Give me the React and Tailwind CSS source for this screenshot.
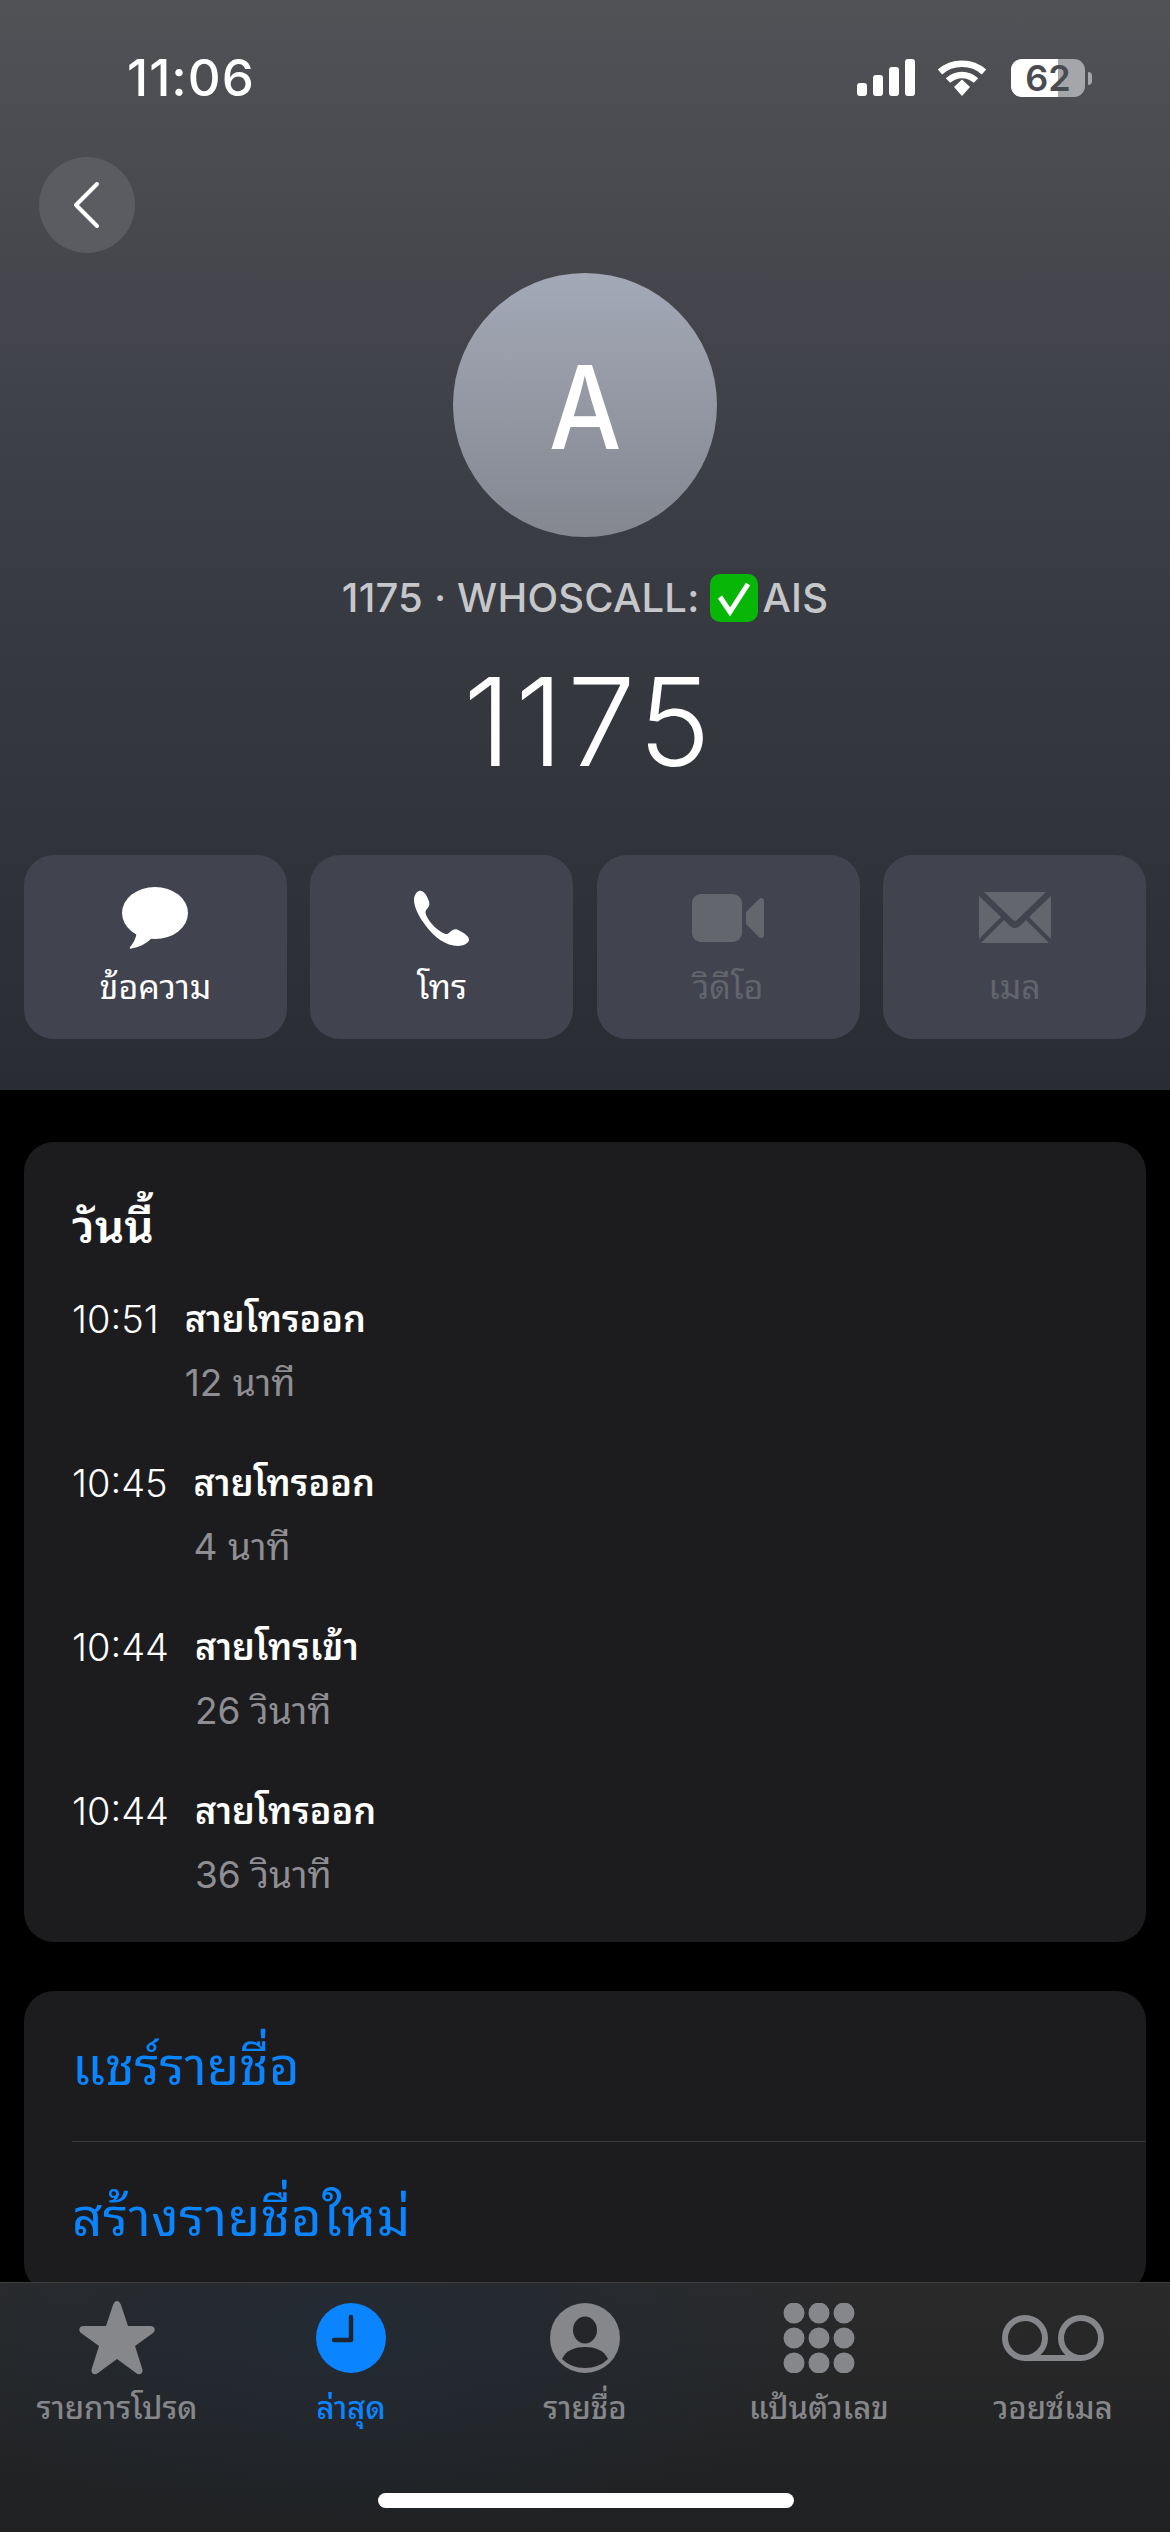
import React from 'react';

const actions = [
    { label: 'ข้อความ', icon: <MessageIcon />, dim: false },
    { label: 'โทร', icon: <PhoneIcon />, dim: false },
    { label: 'วิดีโอ', icon: <VideoIcon />, dim: true },
    { label: 'เมล', icon: <MailIcon />, dim: true },
];

const calls = [
    { time: '10:51', type: 'สายโทรออก', length: '12 นาที' },
    { time: '10:45', type: 'สายโทรออก', length: '4 นาที' },
    { time: '10:44', type: 'สายโทรเข้า', length: '26 วินาที' },
    { time: '10:44', type: 'สายโทรออก', length: '36 วินาที' },
];

const tabs = [
    { label: 'รายการโปรด', icon: <StarIcon /> },
    { label: 'ล่าสุด', icon: <ClockIcon />, active: true },
    { label: 'รายชื่อ', icon: <PersonIcon /> },
    { label: 'แป้นตัวเลข', icon: <KeypadIcon /> },
    { label: 'วอยซ์เมล', icon: <VoicemailIcon /> },
];

function MessageIcon() {
    return (
        <svg width="68" height="62" viewBox="0 0 68 62" fill="#fff">
            <ellipse cx="34" cy="26" rx="33" ry="26" />
            <path d="M16 42 C16 50 12 57 9 60 C8 62 10 62 12 61 C20 60 27 55 32 50 Z" />
        </svg>
    );
}

function PhoneIcon() {
    return (
        <svg width="56" height="56" viewBox="0 0 56 56" fill="#fff">
            <path d="M5 1 C9 0 12 4 14 9 C16 13 16 16 13 19 C11 21 11 23 13 27 C17 34 22 39 29 43 C32 45 34 44 36 42 C39 39 42 38 46 41 C51 44 55 46 55 50 C55 53 49 56 44 56 C32 56 20 47 12 36 C5 27 0 17 0 10 C0 6 2 2 5 1 Z" />
        </svg>
    );
}

function VideoIcon() {
    return (
        <svg width="72" height="48" viewBox="0 0 72 48" fill="#64666e">
            <rect x="0" y="0" width="50" height="48" rx="9" />
            <path d="M54 18 L67 5 C69 3 72 4 72 7 L72 41 C72 44 69 45 67 43 L54 30 Z" />
        </svg>
    );
}

function MailIcon() {
    return (
        <svg width="72" height="52" viewBox="0 0 72 52" fill="#64666e">
            <path d="M5 0 H67 L38 28 C36.500 29.500 35.500 29.500 34 28 Z" />
            <path d="M0 4 L22 25 L0 47 Z" />
            <path d="M72 4 L50 25 L72 47 Z" />
            <path d="M25 28 L31 34 C34 36.500 38 36.500 41 34 L47 28 L70 51 H2 Z" />
        </svg>
    );
}

function StarIcon() {
    return (
        <svg width="76" height="74" viewBox="0 0 76 74" fill="#85878a">
            <path d="M38 0 C40 0 41 2 42 4 L49 25 L71 25 C76 25 77 29 74 32 L56 45 L63 67 C65 72 61 75 57 72 L38 58 L19 72 C15 75 11 72 13 67 L20 45 L2 32 C-1 29 0 25 5 25 L27 25 L34 4 C35 2 36 0 38 0 Z" />
        </svg>
    );
}

function ClockIcon() {
    return (
        <svg width="70" height="70" viewBox="0 0 70 70">
            <circle cx="35" cy="35" r="35" fill="#0a84ff" />
            <path d="M35 14 V37 H18" fill="none" stroke="#1c2530" strokeWidth="4.500" strokeLinecap="round" strokeLinejoin="round" />
        </svg>
    );
}

function PersonIcon() {
    return (
        <svg width="70" height="70" viewBox="0 0 70 70">
            <circle cx="35" cy="35" r="35" fill="#85878a" />
            <ellipse cx="35" cy="27" rx="12" ry="13.500" fill="#24262a" />
            <path d="M12 56 C16 47 25 44 35 44 C45 44 54 47 58 56 C52 62 44 65 35 65 C26 65 18 62 12 56 Z" fill="#24262a" />
        </svg>
    );
}

function KeypadIcon() {
    const dots = [11, 36, 61];
    return (
        <svg width="72" height="70" viewBox="0 0 72 70" fill="#85878a">
            {dots.map((y) =>
                dots.map((x) => <circle key={`${x}-${y}`} cx={x} cy={y - 1} r="10.500" />)
            )}
        </svg>
    );
}

function VoicemailIcon() {
    return (
        <svg width="102" height="46" viewBox="0 0 102 46" fill="none" stroke="#85878a" strokeWidth="6">
            <circle cx="23" cy="23" r="20" />
            <circle cx="79" cy="23" r="20" />
            <path d="M23 43 H79" />
        </svg>
    );
}

function StatusIcons() {
    return (
        <div className="flex items-center">
            <svg width="58" height="38" viewBox="0 0 58 38" fill="#fff">
                <rect x="0" y="24" width="10" height="13" rx="3" />
                <rect x="16" y="16" width="10" height="21" rx="3" />
                <rect x="32" y="8" width="10" height="29" rx="3" />
                <rect x="48" y="0" width="10" height="37" rx="3" />
            </svg>
            <svg className="ml-[22px]" width="50" height="38" viewBox="0 0 50 38" fill="none" stroke="#fff">
                <path d="M3 13 C15 2 35 2 47 13" strokeWidth="6.500" />
                <path d="M11 21.500 C19 14 31 14 39 21.500" strokeWidth="6.500" />
                <path d="M17 28 L25 20.500 L33 28 L25 37 Z" fill="#fff" stroke="none" />
            </svg>
            <div className="relative ml-[24px] flex h-[38px] w-[74px] items-center justify-center rounded-[11px] bg-[#a5a6a9]">
                <div className="absolute inset-y-0 left-0 w-[47px] rounded-l-[11px] bg-white" />
                <span className="relative text-[36px] font-semibold leading-[38px] text-[#4a4b50]">62</span>
            </div>
            <div className="ml-[3px] h-[13px] w-[4px] rounded-r-full bg-[#a5a6a9]" />
        </div>
    );
}

function WhoscallCheck() {
    return (
        <svg className="ml-[10px] mr-[3px]" width="50" height="48" viewBox="0 0 50 48">
            <rect x="1" y="0" width="48" height="48" rx="10" fill="#07b607" />
            <path d="M11 23 L21 38 L39 10" fill="none" stroke="#fff" strokeWidth="5" strokeLinejoin="miter" />
        </svg>
    );
}

export default function App() {
    return (
        <div className="relative h-[2532px] w-[1170px] overflow-hidden bg-black font-['Inter','Noto_Sans_Thai_Looped','Noto_Sans_Thai','Noto_Sans',sans-serif] text-white">
            <header className="h-[1090px] bg-gradient-to-b from-[#515256] via-[#3a3c44] to-[#2a2c34]">
                <div className="flex items-start justify-between pl-[127px] pr-[78px] pt-[52px]">
                    <span className="text-[51px] font-medium leading-[52px] tracking-[1px]">11:06</span>
                    <div className="pt-[7px]"><StatusIcons /></div>
                </div>
                <button className="ml-[39px] mt-[53px] flex h-[96px] w-[96px] items-center justify-center rounded-full bg-[#5a5c61]">
                    <svg width="30" height="48" viewBox="0 0 30 48" fill="none" stroke="#fff" strokeWidth="4" strokeLinecap="round" strokeLinejoin="round">
                        <path d="M25 3 L4 24 L25 45" />
                    </svg>
                </button>
                <div className="mt-[20px] flex flex-col items-center">
                    <div className="flex h-[264px] w-[264px] items-center justify-center rounded-full bg-gradient-to-b from-[#a3a9b7] to-[#848790]">
                        <span className="scale-x-[0.88] pt-[3px] text-[116px] font-medium leading-none">A</span>
                    </div>
                    <div className="mt-[37px] flex items-center text-[40px] font-medium leading-[48px] tracking-[0.2px] text-[#c6c7ca]">
                        <span>1175 · WHOSCALL:</span>
                        <WhoscallCheck />
                        <span>AIS</span>
                    </div>
                    <div className="mt-[30px] pl-[8px] text-[122px] font-light leading-[140px] tracking-[4px]">1175</div>
                </div>
                <div className="mt-[63px] grid grid-cols-4 gap-[23.500px] px-[24px]">
                    {actions.map((a) => (
                        <div key={a.label} className="flex h-[184px] flex-col items-center rounded-[30px] bg-[#41434e] pt-[30px]">
                            <div className="flex h-[66px] items-center">{a.icon}</div>
                            <span className={`mt-[14px] text-[34px] leading-[44px] ${a.dim ? 'text-[#63656d]' : 'text-white'}`}>{a.label}</span>
                        </div>
                    ))}
                </div>
            </header>

            <section className="mx-[24px] mt-[52px] rounded-[30px] bg-[#1c1c1e] px-[48px] pb-[35px] pt-[52px]">
                <h2 className="text-[46px] font-semibold leading-[64px]">วันนี้</h2>
                <div className="mt-[29px] flex flex-col gap-[36px]">
                    {calls.map((c, i) => (
                        <div key={i} className="flex gap-[26px]">
                            <span className="text-[38px] font-light leading-[64px]">{c.time}</span>
                            <div>
                                <div className="text-[36px] font-semibold leading-[64px]">{c.type}</div>
                                <div className="text-[37px] leading-[64px] text-[#8e8e93]">{c.length}</div>
                            </div>
                        </div>
                    ))}
                </div>
            </section>

            <section className="ml-[24px] mr-[24px] mt-[49px] rounded-[30px] bg-[#1c1c1e] pl-[48px]">
                <div className="flex h-[151px] items-center border-b border-[#3a3a3c] text-[53px] leading-none text-[#0a84ff]">แชร์รายชื่อ</div>
                <div className="flex h-[151px] items-center text-[53px] leading-none tracking-[0.5px] text-[#0a84ff]">สร้างรายชื่อใหม่</div>
            </section>

            <nav className="absolute inset-x-0 bottom-0 h-[250px] border-t border-[#3d3e40] bg-[radial-gradient(ellipse_500px_220px_at_350px_50px,rgba(32,44,58,0.6),transparent),linear-gradient(#2a2a2b,#1f2021)]">
                <div className="grid grid-cols-5 pt-[18px]">
                    {tabs.map((t) => (
                        <div key={t.label} className="flex flex-col items-center">
                            <div className="flex h-[74px] items-center">{t.icon}</div>
                            <span className={`mt-[10px] text-[31px] font-medium leading-[46px] ${t.active ? 'text-[#0a84ff]' : 'text-[#85878a]'}`}>{t.label}</span>
                        </div>
                    ))}
                </div>
                <div className="absolute bottom-[24px] left-[378px] h-[15px] w-[416px] rounded-full bg-white" />
            </nav>
        </div>
    );
}
